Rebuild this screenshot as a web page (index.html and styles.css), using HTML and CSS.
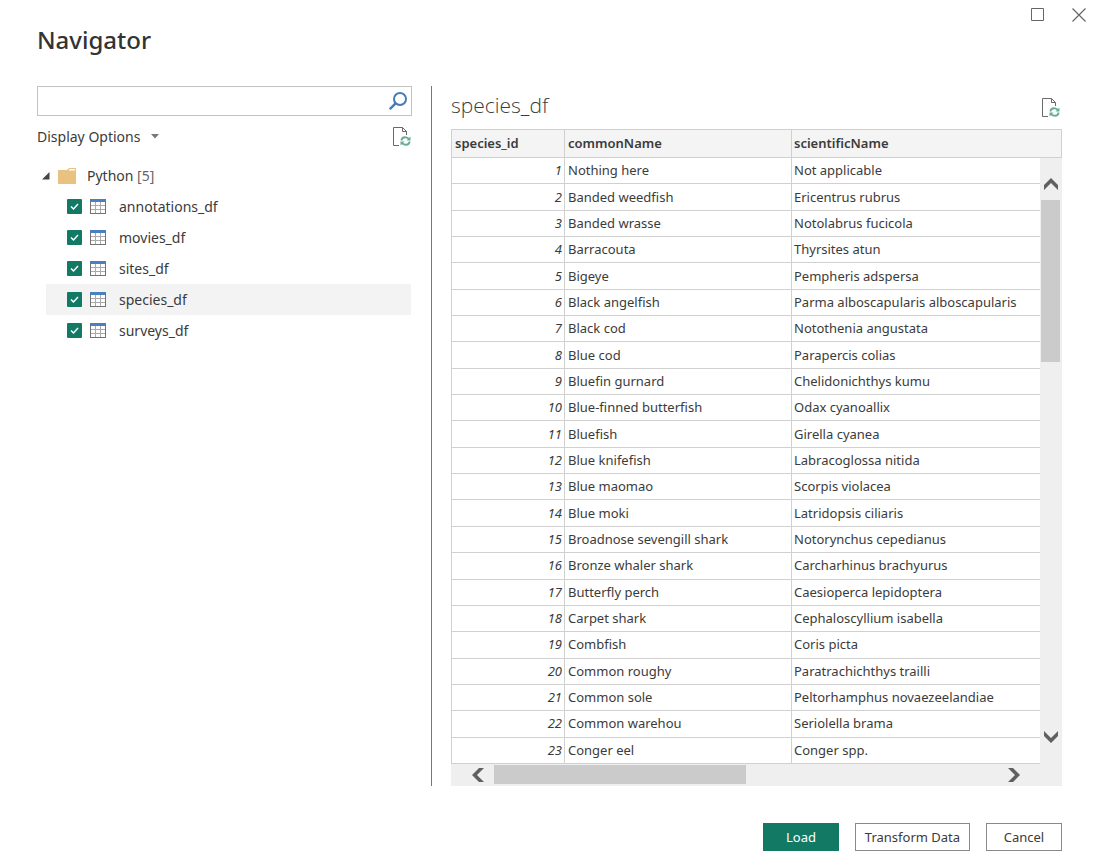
FILE: index.html
```
<!DOCTYPE html>
<html lang="en">
<head>
<meta charset="utf-8">
<title>Navigator</title>
<link rel="stylesheet" href="styles.css">
</head>
<body>
<svg class="sprite" aria-hidden="true">
  <symbol id="refresh-page" viewBox="0 0 18 20">
    <path d="M6 18.500H.5V.5H9.500L13.500 4.500V8M9.500 .5V4.500H13.500" fill="none" stroke="#6a6a6a"/>
    <path d="M8.300 13.500C8.800 11 11 10 13 10.300C14.300 10.500 15.300 11.200 16 12.300M16.700 14.500C16.200 17 14 18 12 17.700C10.700 17.500 9.700 16.800 9 15.700" fill="none" stroke="#68ad92" stroke-width="1.800"/>
    <path d="M17.500 9.500V13.500H13.500ZM7.500 18.500V14.500H11.500Z" fill="#68ad92"/>
  </symbol>
  <symbol id="table-icon" viewBox="0 0 16 15">
    <path d="M0 0H16V15H0Z" fill="#737373"/>
    <path d="M1 3H15V14H1Z" fill="#fff"/>
    <path d="M1 6.500H15M1 10.500H15M5.500 3V14M10.500 3V14" stroke="#aaa" fill="none"/>
    <path d="M0 0H16V3H0Z" fill="#4a80bd"/>
  </symbol>
  <symbol id="chevron" viewBox="0 0 14 12">
    <path d="M0 7L7 0L14 7V12L7 5L0 12Z" fill="#606060"/>
  </symbol>
</svg>
<main class="dialog">
  <header class="titlebar">
    <h1 class="title">Navigator</h1>
    <div class="window-controls">
      <button class="icon-button" aria-label="Maximize"><svg width="14" height="14" viewBox="0 0 14 14"><path d="M.5 .5H12.500V12.500H.5Z" fill="none" stroke="#666"/></svg></button>
      <button class="icon-button" aria-label="Close"><svg width="14" height="14" viewBox="0 0 14 14"><path d="M.5 .5L13.500 13.500M13.500 .5L.5 13.500" fill="none" stroke="#666" stroke-width="1.200"/></svg></button>
    </div>
  </header>
  <div class="content">
    <section class="sources">
      <div class="search">
        <input class="search-input" type="text" aria-label="Search">
        <button class="icon-button" aria-label="Run search"><svg width="18" height="18" viewBox="0 0 18 18"><circle cx="11" cy="7" r="6" fill="none" stroke="#447bb9" stroke-width="2"/><path d="M6.800 11.200L.8 17.200" stroke="#447bb9" stroke-width="2.400"/></svg></button>
      </div>
      <div class="options">
        <button class="options-button">Display Options <svg width="8" height="5" viewBox="0 0 8 5"><path d="M0 0H8L4 4.500Z" fill="#777"/></svg></button>
        <button class="icon-button" aria-label="Refresh list"><svg width="18" height="20"><use href="#refresh-page"/></svg></button>
      </div>
      <div class="tree">
        <div class="folder">
          <svg width="8" height="8" viewBox="0 0 8 8"><path d="M7.500 0V7.500H0Z" fill="#444"/></svg>
          <svg class="folder-icon" width="19" height="17" viewBox="0 0 19 17"><path d="M0 2H9L11 0H18V16H0Z" fill="#e9c282"/><path d="M10.500 2.500L12 1H17V2.500Z" fill="#fff"/></svg>
          <span>Python <span class="count">[5]</span></span>
        </div>
        <label class="item"><input class="check" type="checkbox" checked><svg width="16" height="15"><use href="#table-icon"/></svg><span>annotations_df</span></label>
        <label class="item"><input class="check" type="checkbox" checked><svg width="16" height="15"><use href="#table-icon"/></svg><span>movies_df</span></label>
        <label class="item"><input class="check" type="checkbox" checked><svg width="16" height="15"><use href="#table-icon"/></svg><span>sites_df</span></label>
        <label class="item selected"><input class="check" type="checkbox" checked><svg width="16" height="15"><use href="#table-icon"/></svg><span>species_df</span></label>
        <label class="item"><input class="check" type="checkbox" checked><svg width="16" height="15"><use href="#table-icon"/></svg><span>surveys_df</span></label>
      </div>
    </section>
    <section class="preview">
      <div class="preview-head">
        <h2 class="preview-title">species_df</h2>
        <button class="icon-button" aria-label="Refresh preview"><svg width="18" height="20"><use href="#refresh-page"/></svg></button>
      </div>
      <div class="table-area">
        <table class="data">
          <thead><tr><th class="col-id">species_id</th><th class="col-common">commonName</th><th>scientificName</th></tr></thead>
          <tbody>
            <tr><td>1</td><td>Nothing here</td><td>Not applicable</td></tr>
            <tr><td>2</td><td>Banded weedfish</td><td>Ericentrus rubrus</td></tr>
            <tr><td>3</td><td>Banded wrasse</td><td>Notolabrus fucicola</td></tr>
            <tr><td>4</td><td>Barracouta</td><td>Thyrsites atun</td></tr>
            <tr><td>5</td><td>Bigeye</td><td>Pempheris adspersa</td></tr>
            <tr><td>6</td><td>Black angelfish</td><td>Parma alboscapularis alboscapularis</td></tr>
            <tr><td>7</td><td>Black cod</td><td>Notothenia angustata</td></tr>
            <tr><td>8</td><td>Blue cod</td><td>Parapercis colias</td></tr>
            <tr><td>9</td><td>Bluefin gurnard</td><td>Chelidonichthys kumu</td></tr>
            <tr><td>10</td><td>Blue-finned butterfish</td><td>Odax cyanoallix</td></tr>
            <tr><td>11</td><td>Bluefish</td><td>Girella cyanea</td></tr>
            <tr><td>12</td><td>Blue knifefish</td><td>Labracoglossa nitida</td></tr>
            <tr><td>13</td><td>Blue maomao</td><td>Scorpis violacea</td></tr>
            <tr><td>14</td><td>Blue moki</td><td>Latridopsis ciliaris</td></tr>
            <tr><td>15</td><td>Broadnose sevengill shark</td><td>Notorynchus cepedianus</td></tr>
            <tr><td>16</td><td>Bronze whaler shark</td><td>Carcharhinus brachyurus</td></tr>
            <tr><td>17</td><td>Butterfly perch</td><td>Caesioperca lepidoptera</td></tr>
            <tr><td>18</td><td>Carpet shark</td><td>Cephaloscyllium isabella</td></tr>
            <tr><td>19</td><td>Combfish</td><td>Coris picta</td></tr>
            <tr><td>20</td><td>Common roughy</td><td>Paratrachichthys trailli</td></tr>
            <tr><td>21</td><td>Common sole</td><td>Peltorhamphus novaezeelandiae</td></tr>
            <tr><td>22</td><td>Common warehou</td><td>Seriolella brama</td></tr>
            <tr><td>23</td><td>Conger eel</td><td>Conger spp.</td></tr>
          </tbody>
        </table>
        <div class="vscroll">
          <button class="icon-button" aria-label="Scroll up"><svg width="14" height="12"><use href="#chevron"/></svg></button>
          <div class="vtrack"><div class="vthumb"></div></div>
          <button class="icon-button" aria-label="Scroll down"><svg class="down" width="14" height="12"><use href="#chevron"/></svg></button>
        </div>
      </div>
      <div class="hscroll">
        <button class="icon-button" aria-label="Scroll left"><svg width="12" height="14" viewBox="0 0 12 14"><path d="M7 0L0 7L7 14H12L5 7L12 0Z" fill="#606060"/></svg></button>
        <div class="htrack"><div class="hthumb"></div></div>
        <button class="icon-button" aria-label="Scroll right"><svg width="12" height="14" viewBox="0 0 12 14"><path d="M5 0L12 7L5 14H0L7 7L0 0Z" fill="#606060"/></svg></button>
      </div>
    </section>
  </div>
  <footer class="actions">
    <button class="action primary">Load</button>
    <button class="action wide">Transform Data</button>
    <button class="action">Cancel</button>
  </footer>
</main>
</body>
</html>
```
FILE: styles.css
```
* { box-sizing: border-box; }
body {
  margin: 0;
  background: #fff;
  color: #3b3b3b;
  font: 14px/20px "Noto Sans", "Open Sans", sans-serif;
}
svg { display: block; flex: none; }
button { font: inherit; color: inherit; cursor: pointer; }
.sprite { position: absolute; width: 0; height: 0; }
.icon-button { display: flex; padding: 0; border: 0; background: none; }
.dialog {
  min-height: 100vh;
  display: flex;
  flex-direction: column;
  padding: 8px 31px 12px 37px;
}
.titlebar { display: flex; justify-content: space-between; height: 78px; }
.title { margin: 16px 0 0; font-size: 24px; line-height: 32px; font-weight: 500; color: #333; }
.window-controls { display: flex; gap: 27px; margin-right: -24px; padding-right: 0; align-items: flex-start; }
.content { flex: 1; display: grid; grid-template-columns: 395px 1fr; }
.sources { padding-right: 19px; border-right: 1px solid #777; }
.search {
  display: flex;
  align-items: center;
  height: 30px;
  padding-right: 4px;
  border: 1px solid #c3c3c3;
}
.search-input { flex: 1; min-width: 0; height: 100%; padding: 0 6px; border: 0; outline: 0; font: inherit; }
.options { display: flex; justify-content: space-between; align-items: center; height: 41px; padding-right: 1px; }
.options-button { display: flex; align-items: center; gap: 11px; padding: 0; border: 0; background: none; }
.tree { padding: 4px 1px 0 9px; }
.folder { display: flex; align-items: center; height: 30px; gap: 8px; margin-left: -4px; }
.folder-icon { margin-right: 2px; }
.count { color: #666; }
.item { display: flex; align-items: center; min-height: 31px; padding-left: 21px; gap: 8px; }
.item span { padding-left: 5px; }
.selected { background: #f3f3f3; }
.check {
  appearance: none;
  width: 15px;
  height: 15px;
  margin: 0;
  border-radius: 1px;
  background: #127965 url("data:image/svg+xml,%3Csvg xmlns='http://www.w3.org/2000/svg' viewBox='0 0 15 15'%3E%3Cpath d='M4 7.500L6.500 10L11 5' fill='none' stroke='white' stroke-width='1.500'/%3E%3C/svg%3E");
}
.preview { display: flex; flex-direction: column; padding-left: 19px; min-width: 0; }
.preview-head { display: flex; justify-content: space-between; height: 43px; padding-right: 2px; align-items: center; }
.preview-title { margin: 0 0 6px; font-size: 21px; line-height: 28px; font-weight: 300; font-family: "Open Sans", "Noto Sans", sans-serif; }
.table-area { position: relative; flex: 1; display: grid; }
.data { width: 100%; height: 100%; border-collapse: collapse; table-layout: fixed; font-size: 13px; line-height: 18px; }
.data th, .data td { border: 1px solid #d0d0d0; padding: 0 3px 1px; text-align: left; white-space: nowrap; }
.data th { height: 28px; background: #f4f4f4; font-weight: 600; }
.data td:first-child { text-align: right; font-style: italic; padding-right: 2px; }
.data th:last-child, .data td:last-child { padding-left: 2px; }
.col-id { width: 113px; }
.col-common { width: 227px; }
.vscroll {
  position: absolute;
  top: 29px;
  right: 0;
  bottom: 0;
  width: 22px;
  display: flex;
  flex-direction: column;
  align-items: center;
  gap: 10px;
  padding: 20px 1px 21px;
  background: #efefef;
}
.vtrack { flex: 1; width: 100%; }
.vthumb { width: 19px; height: 31%; background: #cbcbcb; }
.down { transform: rotate(180deg); }
.hscroll { display: flex; align-items: center; gap: 10px; height: 22px; padding: 0 42px 0 21px; background: #efefef; }
.htrack { flex: 1; height: 20px; }
.hthumb { width: 50%; height: 19px; background: #cbcbcb; }
.actions { display: flex; justify-content: flex-end; gap: 16px; padding-top: 37px; font-size: 13px; }
.action { height: 28px; min-width: 76px; padding: 0; border: 1px solid #8a8a8a; background: #fff; line-height: 18px; }
.primary { border-color: #127965; background: #127965; color: #fff; }
.wide { min-width: 115px; }
```
